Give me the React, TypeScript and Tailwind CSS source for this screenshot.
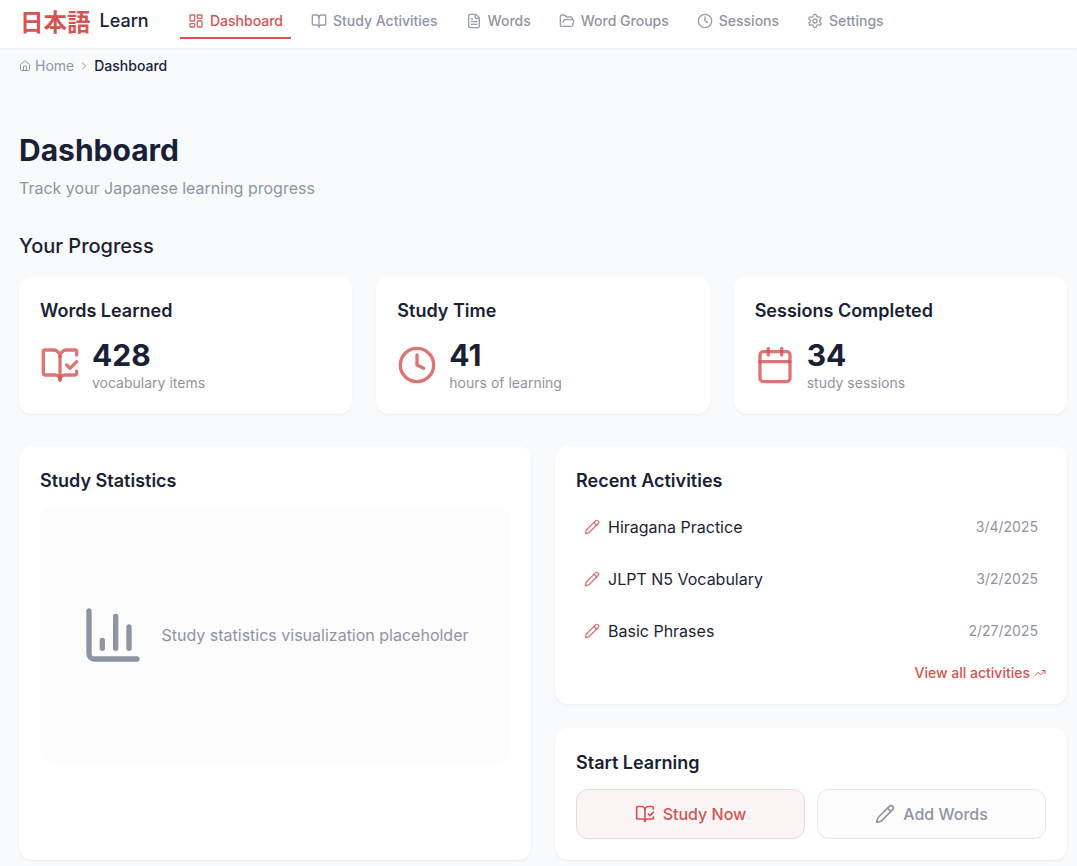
import {
  BookOpen,
  BookOpenCheck,
  Calendar,
  ChartColumn,
  ChevronRight,
  Clock,
  FileText,
  FolderOpen,
  House,
  LayoutDashboard,
  Pencil,
  Settings,
  TrendingUp,
  type LucideIcon,
} from "lucide-react";
import type { ReactNode } from "react";

const navItems: { label: string; icon: LucideIcon; active?: boolean }[] = [
  { label: "Dashboard", icon: LayoutDashboard, active: true },
  { label: "Study Activities", icon: BookOpen },
  { label: "Words", icon: FileText },
  { label: "Word Groups", icon: FolderOpen },
  { label: "Sessions", icon: Clock },
  { label: "Settings", icon: Settings },
];

const stats: { title: string; value: string; unit: string; icon: LucideIcon }[] = [
  { title: "Words Learned", value: "428", unit: "vocabulary items", icon: BookOpenCheck },
  { title: "Study Time", value: "41", unit: "hours of learning", icon: Clock },
  { title: "Sessions Completed", value: "34", unit: "study sessions", icon: Calendar },
];

const activities = [
  { name: "Hiragana Practice", date: "3/4/2025" },
  { name: "JLPT N5 Vocabulary", date: "3/2/2025" },
  { name: "Basic Phrases", date: "2/27/2025" },
];

function Card({ title, children }: { title: string; children: ReactNode }) {
  return (
    <section className="rounded-xl border border-white bg-white p-5 shadow-[0_1px_2px_rgba(0,0,0,0.05)]">
      <h3 className="mb-3 text-lg leading-7 font-semibold">{title}</h3>
      {children}
    </section>
  );
}

function Header() {
  return (
    <header className="flex h-12 items-start bg-white pl-5 shadow-[0_1px_2px_rgba(0,0,0,0.06)]">
      <a className="flex h-[42px] w-40 items-center gap-[9px]">
        <span className="font-['Noto_Sans_CJK_JP',sans-serif] text-[23.5px] leading-8 font-bold text-[#d65353]">
          日本語
        </span>
        <span className="text-lg leading-7 font-medium">Learn</span>
      </a>
      <nav className="flex gap-3">
        {navItems.map(({ label, icon: Icon, active }) => (
          <a
            key={label}
            className={
              active
                ? "flex h-[39px] items-center gap-1.5 border-b-2 border-[#d65353] px-2 pt-1 text-sm font-medium text-[#d65353]"
                : "flex h-[39px] items-center gap-1.5 border-b-2 border-transparent px-2 pt-1 text-sm font-medium text-[#8f94a4]"
            }
          >
            <Icon className="size-4 shrink-0 opacity-90" />
            <span className="whitespace-nowrap">{label}</span>
          </a>
        ))}
      </nav>
    </header>
  );
}

export default function App() {
  return (
    <div className="h-[866px] overflow-hidden bg-[#f9fafc] font-[Inter,sans-serif] text-[#1a1f36] antialiased">
      <Header />
      <main className="pt-2 pr-2.5 pl-[19px]">
        <div className="flex h-5 items-center gap-1 text-sm text-[#8f94a4]">
          <House className="size-3" />
          <span>Home</span>
          <ChevronRight className="size-3" />
          <span className="font-medium text-[#1a1f36]">Dashboard</span>
        </div>

        <h1 className="mt-14 text-3xl leading-9 font-bold">Dashboard</h1>
        <p className="mt-2 text-base leading-6 text-[#8f94a4]">Track your Japanese learning progress</p>

        <h2 className="mt-8 mb-4 text-xl leading-7 font-medium">Your Progress</h2>
        <div className="grid grid-cols-3 gap-6">
          {stats.map(({ title, value, unit, icon: Icon }) => (
            <Card key={title} title={title}>
              <div className="flex items-center gap-3">
                <Icon className="size-10 text-[#d65353]/80" />
                <div>
                  <div className="text-3xl leading-9 font-bold">{value}</div>
                  <div className="text-sm leading-5 text-[#8f94a4]">{unit}</div>
                </div>
              </div>
            </Card>
          ))}
        </div>

        <div className="mt-8 grid grid-cols-2 gap-6">
          <Card title="Study Statistics">
            <div className="flex h-64 items-center justify-center gap-4 rounded-xl bg-[#fcfcfd] text-[#8f94a4]">
              <ChartColumn className="size-16" />
              <span>Study statistics visualization placeholder</span>
            </div>
          </Card>

          <div className="flex flex-col gap-6">
            <Card title="Recent Activities">
              <ul className="flex flex-col gap-3">
                {activities.map(({ name, date }) => (
                  <li key={name} className="flex items-center gap-2 p-2">
                    <Pencil className="size-4 text-[#d65353]/80" />
                    <span className="leading-6">{name}</span>
                    <span className="ml-auto text-sm leading-5 text-[#8f94a4]">{date}</span>
                  </li>
                ))}
              </ul>
              <a className="mt-3 flex items-center justify-end gap-1 text-sm leading-5 font-medium text-[#d65353]">
                View all activities
                <TrendingUp className="size-3" />
              </a>
            </Card>

            <Card title="Start Learning">
              <div className="grid grid-cols-2 gap-3">
                <button className="flex h-[50px] items-center justify-center gap-2 rounded-xl border border-[#f5d5d6] bg-[#fcf5f6] font-medium text-[#d65353]">
                  <BookOpenCheck className="size-5" />
                  Study Now
                </button>
                <button className="flex h-[50px] items-center justify-center gap-2 rounded-xl border border-[#e7e8ea] bg-[#fdfdfd] font-medium text-[#8f94a4]">
                  <Pencil className="size-5" />
                  Add Words
                </button>
              </div>
            </Card>
          </div>
        </div>
      </main>
    </div>
  );
}
